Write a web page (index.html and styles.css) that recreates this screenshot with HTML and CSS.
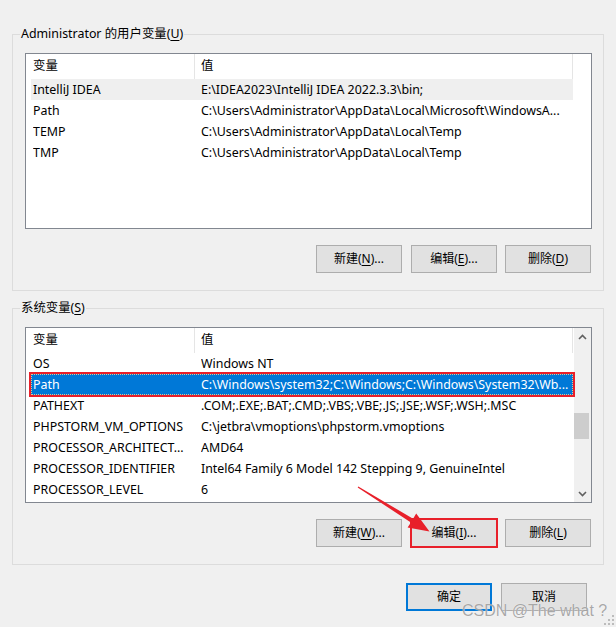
FILE: index.html
```html
<!DOCTYPE html>
<html lang="zh-CN">
<head>
<meta charset="utf-8">
<title>环境变量</title>
<link rel="stylesheet" href="styles.css">
</head>
<body>
<div class="dialog">
  <section class="group">
    <div class="group-title">Administrator 的用户变量(<u>U</u>)</div>
    <div class="listview">
      <div class="list-main">
        <div class="list-head"><div class="hcell c1">变量</div><div class="hcell c2">值</div></div>
        <div class="rows">
          <div class="row hot"><span class="name">IntelliJ IDEA</span><span class="value">E:\IDEA2023\IntelliJ IDEA 2022.3.3\bin;</span></div>
          <div class="row"><span class="name">Path</span><span class="value">C:\Users\Administrator\AppData\Local\Microsoft\WindowsA...</span></div>
          <div class="row"><span class="name">TEMP</span><span class="value">C:\Users\Administrator\AppData\Local\Temp</span></div>
          <div class="row"><span class="name">TMP</span><span class="value">C:\Users\Administrator\AppData\Local\Temp</span></div>
        </div>
      </div>
      <div class="vscroll empty"></div>
    </div>
    <div class="btn-row">
      <button class="btn">新建(<u>N</u>)...</button>
      <button class="btn">编辑(<u>E</u>)...</button>
      <button class="btn">删除(<u>D</u>)</button>
    </div>
  </section>

  <section class="group">
    <div class="group-title">系统变量(<u>S</u>)</div>
    <div class="listview">
      <div class="list-main">
        <div class="list-head"><div class="hcell c1">变量</div><div class="hcell c2">值</div></div>
        <div class="rows">
          <div class="row"><span class="name">OS</span><span class="value">Windows NT</span></div>
          <div class="row selected marked"><span class="name">Path</span><span class="value">C:\Windows\system32;C:\Windows;C:\Windows\System32\Wb...</span></div>
          <div class="row"><span class="name">PATHEXT</span><span class="value">.COM;.EXE;.BAT;.CMD;.VBS;.VBE;.JS;.JSE;.WSF;.WSH;.MSC</span></div>
          <div class="row"><span class="name">PHPSTORM_VM_OPTIONS</span><span class="value">C:\jetbra\vmoptions\phpstorm.vmoptions</span></div>
          <div class="row"><span class="name">PROCESSOR_ARCHITECT...</span><span class="value">AMD64</span></div>
          <div class="row"><span class="name">PROCESSOR_IDENTIFIER</span><span class="value">Intel64 Family 6 Model 142 Stepping 9, GenuineIntel</span></div>
          <div class="row"><span class="name">PROCESSOR_LEVEL</span><span class="value">6</span></div>
        </div>
      </div>
      <div class="vscroll">
        <div class="sb-arrow">
          <svg width="9" height="6" viewBox="0 0 9 6"><polyline points="1,5 4.5,1.5 8,5" fill="none" stroke="#606060" stroke-width="1.6"/></svg>
        </div>
        <div class="sb-track"><div class="sb-thumb"></div></div>
        <div class="sb-arrow">
          <svg width="9" height="6" viewBox="0 0 9 6"><polyline points="1,1 4.5,4.5 8,1" fill="none" stroke="#606060" stroke-width="1.6"/></svg>
        </div>
      </div>
    </div>
    <div class="btn-row">
      <button class="btn">新建(<u>W</u>)...</button>
      <button class="btn marked-btn">编辑(<u>I</u>)...</button>
      <button class="btn">删除(<u>L</u>)</button>
    </div>
  </section>

  <div class="footer">
    <button class="btn default">确定</button>
    <button class="btn">取消</button>
  </div>
</div>

<!-- red pointer arrow drawn over the dialog -->
<svg class="pointer" width="616" height="627" viewBox="0 0 616 627">
  <polygon points="358.3,486.4 413.1,518.8 416.2,513.4 429.5,531.5 407.6,527.6 410.9,522.4 357.7,487.6" fill="#e8202a"/>
</svg>

<div class="watermark">CSDN @The what ?</div>

<svg class="grip" width="12" height="12" viewBox="0 0 12 12">
  <rect x="9" y="1" width="2" height="2" fill="#bcbcbc"/>
  <rect x="5" y="5" width="2" height="2" fill="#bcbcbc"/>
  <rect x="9" y="5" width="2" height="2" fill="#bcbcbc"/>
  <rect x="1" y="9" width="2" height="2" fill="#bcbcbc"/>
  <rect x="5" y="9" width="2" height="2" fill="#bcbcbc"/>
  <rect x="9" y="9" width="2" height="2" fill="#bcbcbc"/>
</svg>
</body>
</html>
```

FILE: styles.css
```css
* {
  box-sizing: border-box;
}

html, body {
  margin: 0;
  padding: 0;
  background: #f0f0f0;
}

body {
  width: 616px;
  height: 627px;
  overflow: hidden;
  position: relative;
  font-family: "Noto Sans", "Noto Sans CJK SC", sans-serif;
  font-size: 12.4px;
  color: #000;
}

.dialog {
  padding: 34px 0 0 12px;
  display: flex;
  flex-direction: column;
}

/* group box */
.group {
  width: 592px;
  border: 1px solid #dcdcdc;
  padding: 0 11px 17px 12px;
  display: flex;
  flex-direction: column;
}

.group + .group {
  margin-top: 17px;
}

.group-title {
  align-self: flex-start;
  height: 16px;
  line-height: 16px;
  margin: -9px 0 0 -5px;
  padding: 0 1px;
  background: #f0f0f0;
  white-space: nowrap;
}

u {
  text-decoration: underline;
  text-underline-offset: 2px;
}

/* list view */
.listview {
  margin-top: 11px;
  height: 176px;
  border: 1px solid #828790;
  background: #fff;
  display: flex;
}

.list-main {
  flex: 1;
  min-width: 0;
  display: flex;
  flex-direction: column;
}

.list-head {
  display: flex;
  height: 25px;
  line-height: 24px;
}

.hcell {
  border-right: 1px solid #e5e5e5;
  white-space: nowrap;
}

.hcell.c1 {
  width: 169px;
  padding-left: 7px;
}

.hcell.c2 {
  flex: 1;
  padding-left: 6px;
  margin-right: 1px;
}

.rows {
  padding-left: 5px;
  margin-right: 1px;
}

.row {
  position: relative;
  display: grid;
  grid-template-columns: 168px 1fr;
  height: 21px;
  line-height: 21px;
  padding-left: 2px;
  white-space: nowrap;
}

.row .name,
.row .value {
  overflow: hidden;
}

.row.hot {
  background: #efefef;
}

.row.selected {
  background: #0078d7;
  color: #fff;
}

.row.selected::after {
  content: "";
  position: absolute;
  inset: 0;
  border: 1px dotted rgba(255, 214, 140, 0.85);
}

/* vertical scrollbar */
.vscroll {
  width: 17px;
  background: #f0f0f0;
  display: flex;
  flex-direction: column;
}

.vscroll.empty {
  background: #fff;
}

.sb-arrow {
  height: 17px;
  display: flex;
  align-items: center;
  justify-content: center;
}

.sb-track {
  flex: 1;
}

.sb-thumb {
  margin: 68px 2px 0 0;
  height: 26px;
  background: #cdcdcd;
}

/* buttons */
.btn-row {
  margin-top: 16px;
  margin-right: 1px;
  display: flex;
  justify-content: flex-end;
  gap: 8px;
}

.btn {
  width: 86px;
  height: 28px;
  padding: 0;
  background: #e1e1e1;
  border: 1px solid #adadad;
  border-radius: 0;
  font: inherit;
  font-size: 12px;
  color: #000;
  line-height: 14px;
}

.btn-row .btn:first-child {
  margin-right: 1px;
}

.btn.default {
  border: 2px solid #0078d7;
}

.footer {
  margin-top: 18px;
  padding-right: 29px;
  display: flex;
  justify-content: flex-end;
  gap: 9px;
}

/* red annotation marks */
.marked {
  outline: 2px solid #e8202a;
  outline-offset: 0;
}

.marked-btn {
  outline: 2px solid #e8202a;
  outline-offset: -1px;
}

.pointer {
  position: absolute;
  left: 0;
  top: 0;
  pointer-events: none;
}

.watermark {
  position: absolute;
  left: 462px;
  top: 605px;
  font-family: "Liberation Sans", Arial, sans-serif;
  font-size: 16px;
  line-height: 12px;
  color: rgba(140, 140, 140, 0.75);
  text-shadow: 0 0 1px rgba(255, 255, 255, 0.9);
  white-space: nowrap;
}

.grip {
  position: absolute;
  right: 1px;
  bottom: 1px;
}
```
